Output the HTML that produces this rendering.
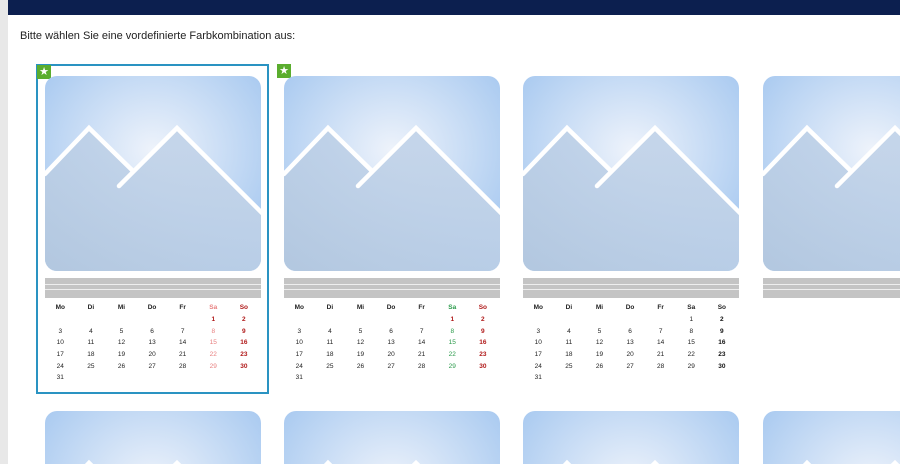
<!DOCTYPE html>
<html><head><meta charset="utf-8"><style>
*{margin:0;padding:0;box-sizing:border-box}
html,body{width:900px;height:464px;overflow:hidden;background:#fff}
body{font-family:"Liberation Sans",sans-serif}
#w{position:relative;width:900px;height:464px;overflow:hidden}
.side{position:absolute;left:0;top:0;width:8px;height:464px;background:#e8e8e8}
.hdr{position:absolute;left:8px;top:0;width:892px;height:15px;background:#0c1f4f}
.title{position:absolute;left:20px;top:30px;font-size:11px;color:#222}
.sel{position:absolute;left:36px;top:64px;width:233px;height:330px;border:2px solid #2a93c2}
.star{position:absolute;width:14px;height:14px;background:#5aad2e;color:#fff;font-size:11px;line-height:14px;text-align:center}
.img{position:absolute;width:216px;height:195px;border-radius:12px;overflow:hidden}
.img.b{height:53px;border-radius:12px 12px 0 0}
.bars{position:absolute;width:216px;height:20px;background:#c4c4c4}
.bars i{position:absolute;left:0;width:100%;height:1px;background:#eee}
table{position:absolute;border-collapse:collapse;font-size:6.5px;color:#222}
td{width:30.6px;height:11.7px;text-align:center;padding:0}
tr.h td{font-weight:bold}
.lr{color:#e88080}.dr{color:#b01818;font-weight:bold}.gr{color:#2a9a4a}.bk{font-weight:bold;color:#111}
</style></head><body><div id="w">
<div class="side"></div><div class="hdr"></div>
<div class="title">Bitte wählen Sie eine vordefinierte Farbkombination aus:</div>
<svg width="0" height="0" style="position:absolute"><defs>
<radialGradient id="g" cx="0.5" cy="0.38" r="0.75"><stop offset="0" stop-color="#eef3fb"/><stop offset="1" stop-color="#9cc2ee"/></radialGradient>
<linearGradient id="f" x1="0" y1="1" x2="1" y2="0"><stop offset="0" stop-color="#b5c8de"/><stop offset="0.5" stop-color="#bccfe6"/><stop offset="1" stop-color="#c6d6ea"/></linearGradient>
<symbol id="m" viewBox="0 0 216 195"><rect width="216" height="195" fill="url(#g)"/>
<polygon points="0,98 44,52 88,95 132,52 216,137 216,195 0,195" fill="url(#f)" opacity="0.9"/>
<polyline points="0,98 44,52 88,95" fill="none" stroke="#fff" stroke-width="4.5" stroke-linecap="round"/>
<polyline points="74,110 132,52 218,138" fill="none" stroke="#fff" stroke-width="4.5" stroke-linecap="round"/></symbol></defs></svg>
<div class="sel"></div>
<div class="star" style="left:37px;top:65px">★</div>
<div class="star" style="left:277px;top:64px">★</div>

<div class="img" style="left:45px;top:76px"><svg width="216" height="195"><use href="#m"/></svg></div>
<div class="img" style="left:284px;top:76px"><svg width="216" height="195"><use href="#m"/></svg></div>
<div class="img" style="left:523px;top:76px"><svg width="216" height="195"><use href="#m"/></svg></div>
<div class="img" style="left:763px;top:76px"><svg width="216" height="195"><use href="#m"/></svg></div>
<div class="img b" style="left:45px;top:411px"><svg width="216" height="195"><use href="#m"/></svg></div>
<div class="img b" style="left:284px;top:411px"><svg width="216" height="195"><use href="#m"/></svg></div>
<div class="img b" style="left:523px;top:411px"><svg width="216" height="195"><use href="#m"/></svg></div>
<div class="img b" style="left:763px;top:411px"><svg width="216" height="195"><use href="#m"/></svg></div>

<div class="bars" style="left:45px;top:278px"><i style="top:6px"></i><i style="top:11px"></i></div>
<div class="bars" style="left:284px;top:278px"><i style="top:6px"></i><i style="top:11px"></i></div>
<div class="bars" style="left:523px;top:278px"><i style="top:6px"></i><i style="top:11px"></i></div>
<div class="bars" style="left:763px;top:278px"><i style="top:6px"></i><i style="top:11px"></i></div>

<table style="left:45px;top:302px">
<tr class="h"><td>Mo</td><td>Di</td><td>Mi</td><td>Do</td><td>Fr</td><td class="lr">Sa</td><td class="dr">So</td></tr>
<tr><td></td><td></td><td></td><td></td><td></td><td class="dr">1</td><td class="dr">2</td></tr>
<tr><td>3</td><td>4</td><td>5</td><td>6</td><td>7</td><td class="lr">8</td><td class="dr">9</td></tr>
<tr><td>10</td><td>11</td><td>12</td><td>13</td><td>14</td><td class="lr">15</td><td class="dr">16</td></tr>
<tr><td>17</td><td>18</td><td>19</td><td>20</td><td>21</td><td class="lr">22</td><td class="dr">23</td></tr>
<tr><td>24</td><td>25</td><td>26</td><td>27</td><td>28</td><td class="lr">29</td><td class="dr">30</td></tr>
<tr><td>31</td><td></td><td></td><td></td><td></td><td></td><td></td></tr>
</table>
<table style="left:284px;top:302px">
<tr class="h"><td>Mo</td><td>Di</td><td>Mi</td><td>Do</td><td>Fr</td><td class="gr">Sa</td><td class="dr">So</td></tr>
<tr><td></td><td></td><td></td><td></td><td></td><td class="dr">1</td><td class="dr">2</td></tr>
<tr><td>3</td><td>4</td><td>5</td><td>6</td><td>7</td><td class="gr">8</td><td class="dr">9</td></tr>
<tr><td>10</td><td>11</td><td>12</td><td>13</td><td>14</td><td class="gr">15</td><td class="dr">16</td></tr>
<tr><td>17</td><td>18</td><td>19</td><td>20</td><td>21</td><td class="gr">22</td><td class="dr">23</td></tr>
<tr><td>24</td><td>25</td><td>26</td><td>27</td><td>28</td><td class="gr">29</td><td class="dr">30</td></tr>
<tr><td>31</td><td></td><td></td><td></td><td></td><td></td><td></td></tr>
</table>
<table style="left:523px;top:302px">
<tr class="h"><td>Mo</td><td>Di</td><td>Mi</td><td>Do</td><td>Fr</td><td>Sa</td><td>So</td></tr>
<tr><td></td><td></td><td></td><td></td><td></td><td>1</td><td class="bk">2</td></tr>
<tr><td>3</td><td>4</td><td>5</td><td>6</td><td>7</td><td>8</td><td class="bk">9</td></tr>
<tr><td>10</td><td>11</td><td>12</td><td>13</td><td>14</td><td>15</td><td class="bk">16</td></tr>
<tr><td>17</td><td>18</td><td>19</td><td>20</td><td>21</td><td>22</td><td class="bk">23</td></tr>
<tr><td>24</td><td>25</td><td>26</td><td>27</td><td>28</td><td>29</td><td class="bk">30</td></tr>
<tr><td>31</td><td></td><td></td><td></td><td></td><td></td><td></td></tr>
</table>
</div></body></html>
